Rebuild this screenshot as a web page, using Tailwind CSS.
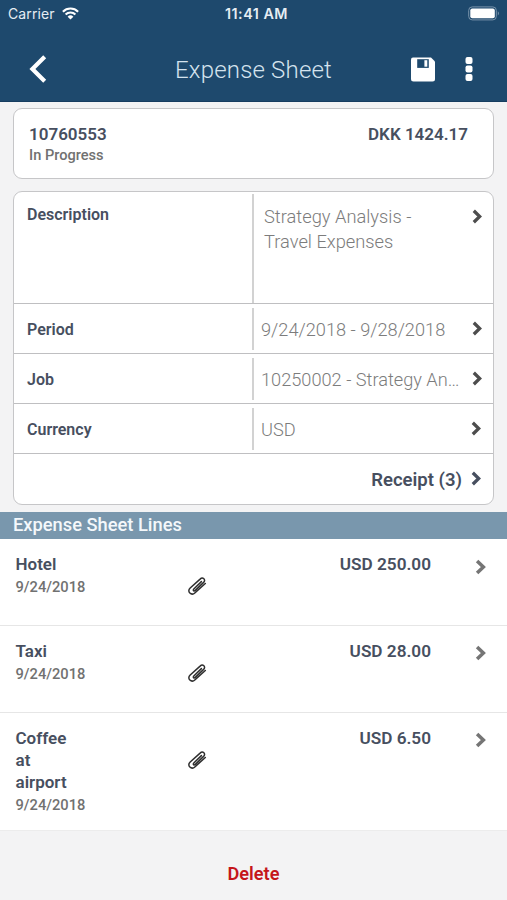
<!DOCTYPE html>
<html lang="en">
<head>
<meta charset="utf-8">
<title>Expense Sheet</title>
<script src="https://cdn.jsdelivr.net/npm/@tailwindcss/browser@4"></script>
</head>
<body class="w-[507px] h-[900px] overflow-hidden bg-[#f3f3f4] font-['Roboto',sans-serif] text-[#474f5f]">
<svg class="hidden">
  <symbol id="chev" viewBox="0 0 10 15"><path d="M1.8 1.8 7.7 7.5 1.8 13.2" fill="none" stroke="currentColor" stroke-width="3.3"/></symbol>
  <symbol id="clip" viewBox="0 0 20 20"><path d="M14.4 5.600 6.800 13c-1.300 1.300.2 2.600 1.500 1.400l8.300-8c2.700-2.600-.8-5.900-3.500-3.300L3.200 12c-3.800 3.700 1.200 8.200 4.900 4.700l10.200-9.200" fill="none" stroke="#2e2e2e" stroke-width="1.500" stroke-linecap="round"/></symbol>
</svg>

<header class="h-[102px] bg-[#1e496d] border-b border-[#163d60] text-white">
  <div class="h-7 grid grid-cols-3 items-center pl-2 pr-[7px] text-[#e6edf3] font-['Inter',sans-serif]">
    <div class="flex items-center gap-[7px]">
      <span class="text-[14px] tracking-[0.1px] -mt-[1px]">Carrier</span>
      <svg class="w-[17px] h-[13px] -mt-[2px]" viewBox="0 0 17 13" fill="none" stroke="#fff" stroke-width="2.100"><path d="M.9 4.700a10.700 10.700 0 0 1 15.200 0M3.600 7.500a7 7 0 0 1 9.800 0"/><path d="M8.500 12.600 5.600 9.700a4.100 4.100 0 0 1 5.800 0z" fill="#fff" stroke="none"/></svg>
    </div>
    <div class="text-center text-[14.3px] font-semibold tracking-[0.5px] pl-[5px] whitespace-nowrap">11:41 AM</div>
    <svg class="justify-self-end w-8 h-[15px] -mt-[2px]" viewBox="0 0 32 15"><rect x=".7" y=".9" width="27.600" height="13" rx="3.500" fill="none" stroke="#7893aa"/><rect x="2.300" y="2.600" width="24.500" height="9.600" rx="2" fill="#fff"/><path d="M29.800 5.300c1.500.8 1.500 3.400 0 4.200z" fill="#7893aa"/></svg>
  </div>
  <div class="h-[73px] grid grid-cols-[175px_1fr_175px] items-center pt-[10px]">
    <svg class="w-[18px] h-[28px] ml-[29px] -mt-[1px]" viewBox="0 0 18 28"><path d="M15.700 1.800 3.400 14l12.300 12.200" fill="none" stroke="#fff" stroke-width="4.200"/></svg>
    <h1 class="text-[24px] font-light tracking-[0.18px] text-[#d5e3ee] whitespace-nowrap">Expense Sheet</h1>
    <div class="flex items-center gap-[30px] justify-end pr-[34px] -mt-[1px]">
      <svg class="w-6 h-[25px]" viewBox="0 0 24 25"><path d="M2 .5h18l4 4V22q0 2.500-2.500 2.500h-19Q0 24.500 0 22V2.500Q0 .5 2 .5z" fill="#fff"/><path d="M6.200 2.200h11.600v8.700H6.200z" fill="#1e496d"/><path d="M13.400 3.200h2.900v6.500h-2.900z" fill="#fff"/></svg>
      <svg class="w-[8px] h-[24px]" viewBox="0 0 8 24" fill="#fff"><rect x=".5" width="7" height="7" rx="2"/><rect x=".5" y="8.500" width="7" height="7" rx="2"/><rect x=".5" y="17" width="7" height="7" rx="2"/></svg>
    </div>
  </div>
</header>

<main>
  <section class="mx-[13px] mt-[6px] h-[71px] bg-white border-[1.5px] border-[#c6c6c8] rounded-[9px] flex justify-between pl-[15px] pr-[25px] pt-[15px]">
    <div>
      <div class="text-[17px] leading-[20px] font-semibold">10760553</div>
      <div class="text-[14.600px] leading-[22px] font-medium text-[#717171]">In Progress</div>
    </div>
    <div class="text-[17px] leading-[20px] font-semibold">DKK 1424.17</div>
  </section>

  <section class="mx-[13px] mt-[12px] h-[314px] bg-white border-[1.5px] border-[#c6c6c8] rounded-[9px] text-[16px] font-semibold">
    <div class="h-[112px] flex border-b border-[#bfbfc1]">
      <div class="w-[238px] pl-[13px] pt-[12px] leading-[21px]">Description</div>
      <div class="flex-1 flex justify-between border-l-2 border-[#d2d2d2] mt-[2px] pl-[10px] pr-[11px] pt-[11px]">
        <div class="w-[180px] text-[18.3px] leading-[24.500px] font-light text-[#7c7c7c]">Strategy Analysis - Travel Expenses</div>
        <svg class="w-[10px] h-[15px] mt-[4px] text-[#4d4d4d]"><use href="#chev"/></svg>
      </div>
    </div>
    <div class="h-[50px] flex border-b border-[#bfbfc1]">
      <div class="w-[238px] pl-[13px] leading-[51px]">Period</div>
      <div class="flex-1 flex items-center justify-between border-l-2 border-[#d2d2d2] mt-[4px] mb-[3px] pl-[7px] pr-[11px]">
        <div class="text-[18.2px] font-light text-[#7c7c7c] pt-[1px]">9/24/2018 - 9/28/2018</div>
        <svg class="w-[10px] h-[15px] -mt-[1px] text-[#4d4d4d]"><use href="#chev"/></svg>
      </div>
    </div>
    <div class="h-[50px] flex border-b border-[#bfbfc1]">
      <div class="w-[238px] pl-[13px] leading-[51px]">Job</div>
      <div class="flex-1 flex items-center justify-between border-l-2 border-[#d2d2d2] mt-[4px] mb-[3px] pl-[7px] pr-[11px]">
        <div class="text-[18.2px] font-light text-[#7c7c7c] pt-[1px]">10250002 - Strategy An…</div>
        <svg class="w-[10px] h-[15px] -mt-[1px] text-[#4d4d4d]"><use href="#chev"/></svg>
      </div>
    </div>
    <div class="h-[50px] flex border-b border-[#bfbfc1]">
      <div class="w-[238px] pl-[13px] leading-[51px]">Currency</div>
      <div class="flex-1 flex items-center justify-between border-l-2 border-[#d2d2d2] mt-[4px] mb-[3px] pl-[7px] pr-[12px]">
        <div class="text-[18.2px] font-light text-[#7c7c7c] pt-[1px]">USD</div>
        <svg class="w-[10px] h-[15px] -mt-[1px] text-[#4d4d4d]"><use href="#chev"/></svg>
      </div>
    </div>
    <div class="h-[50px] flex items-center justify-end gap-[9px] pr-[12px] text-[18.5px]">
      <span class="pt-[3px]">Receipt (3)</span>
      <svg class="w-[10px] h-[15px] -mt-[2px]"><use href="#chev"/></svg>
    </div>
  </section>

  <h2 class="mt-[7px] h-[27px] bg-[#7997ad] pl-[13px] text-[18.3px] leading-[26px] font-medium text-[#f4f8fb]">Expense Sheet Lines</h2>

  <ul class="bg-white">
    <li class="h-[87px] flex pl-[15.500px] pr-[21px] pt-[14px] border-b border-[#e6e6e6]">
      <div class="w-[171.500px]"><div class="w-[60px] text-[17px] leading-[22px] font-semibold">Hotel</div><div class="text-[14.7px] leading-[25px] font-medium text-[#717171]">9/24/2018</div></div>
      <svg class="w-5 h-5 mt-[23px]"><use href="#clip"/></svg>
      <div class="flex-1 text-right text-[17.2px] leading-[22px] font-semibold">USD 250.00</div>
      <svg class="w-[11px] h-[16px] ml-[44px] mt-[6px] text-[#757575]"><use href="#chev"/></svg>
    </li>
    <li class="h-[87px] flex pl-[15.500px] pr-[21px] pt-[14px] border-b border-[#e6e6e6]">
      <div class="w-[171.500px]"><div class="w-[60px] text-[17px] leading-[22px] font-semibold">Taxi</div><div class="text-[14.7px] leading-[25px] font-medium text-[#717171]">9/24/2018</div></div>
      <svg class="w-5 h-5 mt-[23px]"><use href="#clip"/></svg>
      <div class="flex-1 text-right text-[17.2px] leading-[22px] font-semibold">USD 28.00</div>
      <svg class="w-[11px] h-[16px] ml-[44px] mt-[5px] text-[#757575]"><use href="#chev"/></svg>
    </li>
    <li class="h-[118px] flex pl-[15.500px] pr-[21px] pt-[14px] border-b border-[#ececec]">
      <div class="w-[171.500px]"><div class="w-[60px] text-[17px] leading-[22px] font-semibold">Coffee at airport</div><div class="text-[14.7px] leading-[24px] font-medium text-[#717171]">9/24/2018</div></div>
      <svg class="w-5 h-5 mt-[23px]"><use href="#clip"/></svg>
      <div class="flex-1 text-right text-[17.2px] leading-[22px] font-semibold">USD 6.50</div>
      <svg class="w-[11px] h-[16px] ml-[44px] mt-[5px] text-[#757575]"><use href="#chev"/></svg>
    </li>
  </ul>
</main>
<footer class="h-[69px] pt-[12px] text-center text-[18.2px] leading-[62px] font-semibold text-[#c5161b]">Delete</footer>
</body>
</html>
